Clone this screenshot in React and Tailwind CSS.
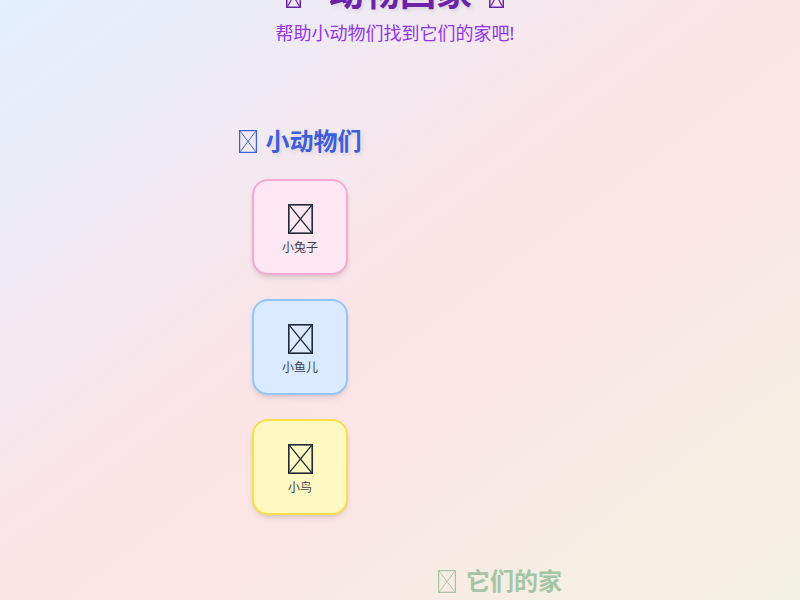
import React from "react";

function Tofu({ w, h, color, sw = 1.5 }) {
  return (
    <svg width={w} height={h} viewBox={`0 0 ${w} ${h}`} className="shrink-0 block">
      <rect x={sw / 2} y={sw / 2} width={w - sw} height={h - sw} fill="none" stroke={color} strokeWidth={sw} />
      <line x1={sw} y1={sw} x2={w - sw} y2={h - sw} stroke={color} strokeWidth={sw * 0.8} />
      <line x1={w - sw} y1={sw} x2={sw} y2={h - sw} stroke={color} strokeWidth={sw * 0.8} />
    </svg>
  );
}

const animals = [
  { name: "小兔子", cls: "bg-[#fde7f3] border-[#f9a8d4]" },
  { name: "小鱼儿", cls: "bg-[#dbeafe] border-[#93c5fd]" },
  { name: "小鸟", cls: "bg-[#fef9c3] border-[#fde047]" },
];

export default function App() {
  return (
    <div
      className="w-full h-screen overflow-hidden bg-gradient-to-br from-[#e3f0ff] via-[#fde4e6] to-[#f3f2e2]"
      style={{ fontFamily: '"Noto Sans", "Noto Sans CJK SC", sans-serif' }}
    >
      <div className="text-center mt-[-27px]">
        <h1 className="flex justify-center items-center pr-[10px] text-4xl font-bold text-[#6b21a8] [text-shadow:2px_2px_4px_rgba(0,0,0,0.1)]">
          <span className="mr-[27px] mt-[6px]">
            <Tofu w={15} h={24} color="#6b21a8" />
          </span>
          <span>动物回家</span>
          <span className="ml-[17px] mt-[6px]">
            <Tofu w={15} h={24} color="#6b21a8" />
          </span>
        </h1>
        <p className="mt-[6px] pr-[10px] text-lg text-[#9333ea]">帮助小动物们找到它们的家吧!</p>
      </div>

      <div className="w-[400px] mx-auto mt-[78px] flex flex-col gap-[50px]">
        <div className="w-[200px] self-start flex flex-col items-center">
          <h2 className="flex items-center gap-[9px] text-2xl font-bold text-[#3b5fdc] mb-[22px] [text-shadow:2px_2px_4px_rgba(0,0,0,0.1)]">
            <Tofu w={18} h={23} color="#3b5fdc" sw={1.2} />
            <span>小动物们</span>
          </h2>
          <div className="flex flex-col gap-6">
            {animals.map((a) => (
              <div
                key={a.name}
                className={`w-24 h-24 pt-[2px] rounded-2xl border-2 shadow-md flex flex-col items-center justify-center ${a.cls}`}
              >
                <div className="h-9 flex items-center">
                  <Tofu w={25} h={30} color="#1f2937" sw={1.6} />
                </div>
                <div className="mt-[3px] text-xs text-[#374151]">{a.name}</div>
              </div>
            ))}
          </div>
        </div>

        <div className="w-[200px] self-end flex flex-col items-center">
          <h2 className="flex items-center gap-[10px] text-2xl font-bold text-[#a3c6a4]">
            <Tofu w={18} h={23} color="#a3c6a4" sw={1.2} />
            <span>它们的家</span>
          </h2>
        </div>
      </div>
    </div>
  );
}
